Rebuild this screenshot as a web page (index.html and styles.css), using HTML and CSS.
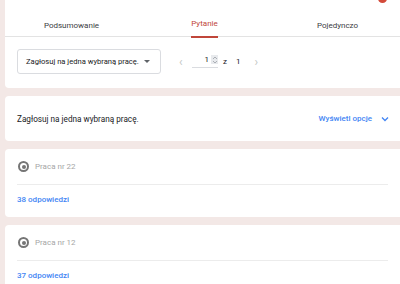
FILE: index.html
```html
<!DOCTYPE html>
<html lang="pl">
<head>
    <meta charset="UTF-8">
    <meta name="viewport" content="width=device-width, initial-scale=1.0">
    <title>Odpowiedzi</title>
    <link rel="stylesheet" href="styles.css">
</head>
<body>

<main class="page">
    <!-- Tabs + question picker -->
    <section class="card top-card">
        <span class="badge"></span>
        <nav class="tabs">
            <a class="tab">Podsumowanie</a>
            <a class="tab active"><span>Pytanie</span></a>
            <a class="tab">Pojedynczo</a>
        </nav>
        <div class="picker">
            <div class="select">
                <span>Zagłosuj na jedna wybraną pracę.</span>
                <span class="caret"></span>
            </div>
            <div class="pager">
                <span class="arrow prev">&lsaquo;</span>
                <span class="page-input">
                    <span class="num">1</span>
                    <span class="spin">
                        <svg width="6" height="8" viewBox="0 0 6 8"><path d="M1 3 L3 1 L5 3 M1 5 L3 7 L5 5" fill="none" stroke="#9aa0a6" stroke-width="0.8"/></svg>
                    </span>
                </span>
                <span class="of">z</span>
                <span class="of total">1</span>
                <span class="arrow">&rsaquo;</span>
            </div>
        </div>
    </section>

    <!-- Question header -->
    <section class="card question">
        <span class="question-title">Zagłosuj na jedna wybraną pracę.</span>
        <a class="options">
            Wyświetl opcje
            <svg width="8" height="6" viewBox="0 0 8 6"><path d="M1 1.5 L4 4.5 L7 1.5" fill="none" stroke="#4285f4" stroke-width="1.3"/></svg>
        </a>
    </section>

    <!-- Answers -->
    <section class="card answer">
        <div class="choice">
            <span class="radio"></span>
            <span class="choice-label">Praca nr 22</span>
        </div>
        <div class="count">38 odpowiedzi</div>
    </section>

    <section class="card answer">
        <div class="choice">
            <span class="radio"></span>
            <span class="choice-label">Praca nr 12</span>
        </div>
        <div class="count">37 odpowiedzi</div>
    </section>
</main>

</body>
</html>
```

FILE: styles.css
```css
/* Global Styles */
body {
    margin: 0;
    padding: 0;
    font-family: Roboto, "Liberation Sans", Arial, sans-serif;
    background-color: #f3e8e6;
    overflow: hidden;
}
.page {
    width: 404px;
    padding-left: 5px;
    box-sizing: border-box;
}
.card {
    background-color: #fff;
    border-radius: 4px;
    margin-bottom: 8px;
    position: relative;
}

/* Top card */
.top-card {
    border-radius: 0 0 4px 4px;
}
.badge {
    position: absolute;
    top: -6px;
    right: 17px;
    width: 9px;
    height: 9px;
    border-radius: 50%;
    background-color: #d34a3a;
}
.tabs {
    display: grid;
    grid-template-columns: repeat(3, 1fr);
    height: 36px;
    border-bottom: 1px solid #e3e3e3;
}
.tab {
    display: flex;
    justify-content: center;
    align-items: center;
    padding-top: 12px;
    font-size: 8px;
    color: #3c4043;
    cursor: pointer;
}
.tab.active {
    color: #c0463a;
}
.tab.active span {
    display: block;
    height: 100%;
    line-height: 24px;
    box-sizing: border-box;
    border-bottom: 2px solid #c0463a;
}
.picker {
    display: flex;
    align-items: center;
    padding: 12px 12px 14px;
}
.select {
    width: 144px;
    height: 25px;
    box-sizing: border-box;
    border: 1px solid #dadce0;
    border-radius: 3px;
    display: flex;
    align-items: center;
    justify-content: space-between;
    padding: 0 10px 0 8px;
    font-size: 7.6px;
    white-space: nowrap;
    color: #202124;
}
.caret {
    width: 0;
    height: 0;
    border-left: 3px solid transparent;
    border-right: 3px solid transparent;
    border-top: 3px solid #5f6368;
}
.pager {
    display: flex;
    align-items: center;
    margin-left: 18px;
    font-size: 8px;
    color: #202124;
}
.arrow {
    color: #c4c7c5;
    font-size: 12px;
}
.page-input {
    display: flex;
    align-items: center;
    margin: 0 5px 0 9px;
    padding: 0 0 3px 13px;
    border-bottom: 1px solid #dadce0;
}
.num {
    margin-right: 2px;
}
.spin {
    display: flex;
    align-items: center;
    justify-content: center;
    width: 7px;
    height: 9px;
    background-color: #e8eaed;
}
.of {
    margin-right: 9px;
}
.of.total {
    margin-right: 14px;
}

/* Question header */
.question {
    height: 45px;
    display: flex;
    align-items: center;
    justify-content: space-between;
    padding: 0 15px 0 12px;
}
.question-title {
    font-size: 8.2px;
    color: #202124;
}
.options {
    display: flex;
    align-items: center;
    gap: 9px;
    font-size: 8px;
    font-weight: 500;
    color: #4285f4;
    cursor: pointer;
}

/* Answers */
.answer {
    height: 68px;
    padding: 0 16px 0 12px;
    box-sizing: border-box;
}
.choice {
    display: flex;
    align-items: center;
    height: 35px;
    border-bottom: 1px solid #ececec;
}
.radio {
    width: 7px;
    height: 7px;
    border: 2px solid #757575;
    border-radius: 50%;
    margin: 0 6px 0 1px;
    position: relative;
}
.radio::after {
    content: "";
    position: absolute;
    top: 1.5px;
    left: 1.5px;
    width: 4px;
    height: 4px;
    border-radius: 50%;
    background-color: #757575;
}
.choice-label {
    font-size: 8px;
    color: #a6a6a6;
}
.count {
    padding-top: 10px;
    font-size: 8px;
    font-weight: 500;
    color: #4285f4;
}
```
